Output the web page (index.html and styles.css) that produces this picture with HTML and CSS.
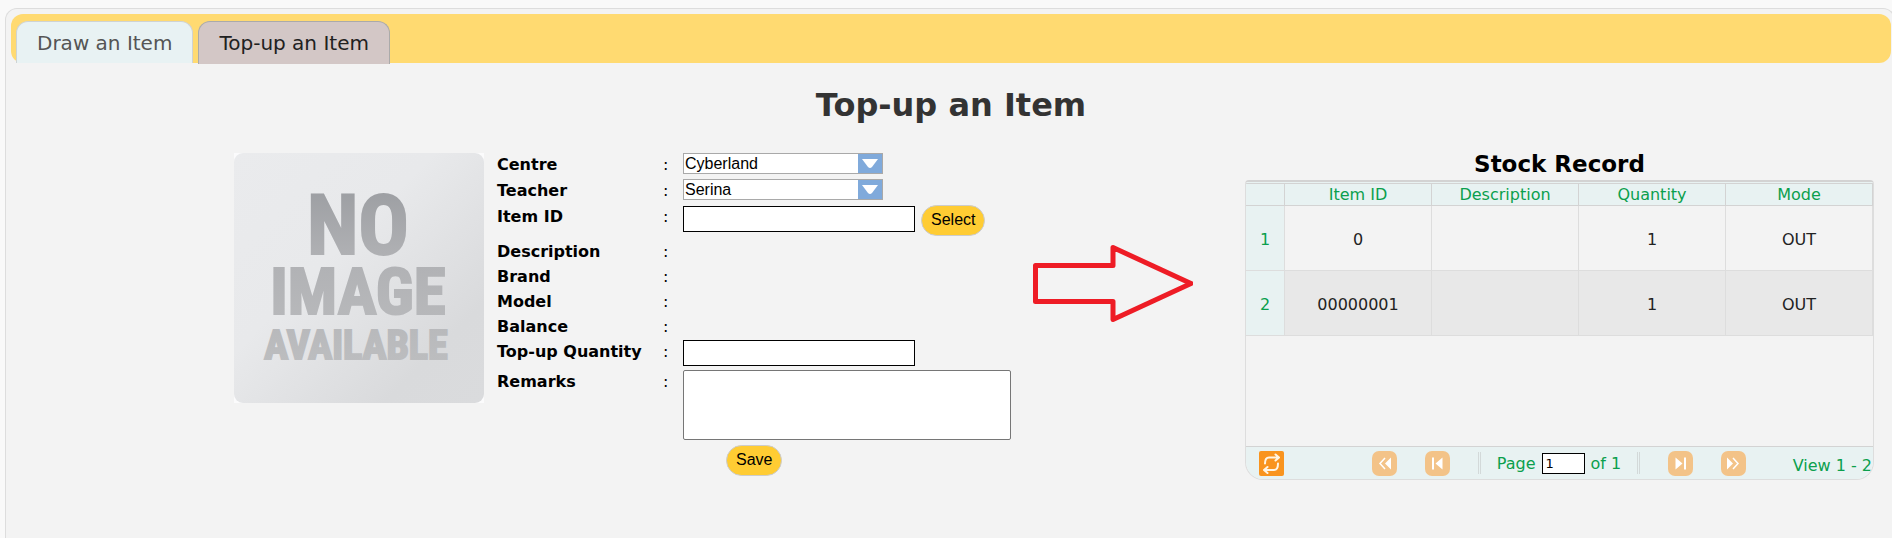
FILE: index.html
```html
<!DOCTYPE html>
<html lang="en">
<head>
<meta charset="utf-8">
<title>Top-up an Item</title>
<link rel="stylesheet" href="styles.css">
</head>
<body>
<main class="panel">
  <nav class="tabs">
    <a class="tab" href="#draw">Draw an Item</a>
    <a class="tab tab-active" href="#topup" aria-current="page">Top-up an Item</a>
  </nav>
  <h1 class="title">Top-up an Item</h1>
  <div class="content">
    <div class="photo">
      <svg class="photo-art" viewBox="0 0 250 250" role="img" aria-label="No image available">
        <defs>
          <linearGradient id="card" x1="0" y1="0" x2="1" y2="1">
            <stop offset="0" stop-color="#eaebed"/>
            <stop offset="0.4" stop-color="#e8e9eb"/>
            <stop offset="0.8" stop-color="#d9dadc"/>
            <stop offset="1" stop-color="#dadbdd"/>
          </linearGradient>
          <linearGradient id="ink" gradientUnits="userSpaceOnUse" x1="0" y1="34" x2="0" y2="208">
            <stop offset="0" stop-color="#9c9ea2"/>
            <stop offset="0.4" stop-color="#b0b1b4"/>
            <stop offset="1" stop-color="#bcbdbf"/>
          </linearGradient>
        </defs>
        <rect width="250" height="250" fill="#fbfbfc"/>
        <rect width="250" height="250" rx="9" fill="url(#card)"/>
        <g class="photo-text" fill="url(#ink)" stroke="url(#ink)" text-anchor="middle">
          <text class="word-no" x="124" y="101">NO</text>
          <text class="word-image" x="124" y="161">IMAGE</text>
          <text class="word-available" x="122" y="206">AVAILABLE</text>
        </g>
      </svg>
    </div>
    <form class="form">
      <div class="row">
        <label class="label" for="centre">Centre</label><span>:</span>
        <div class="field"><span class="select"><select id="centre"><option>Cyberland</option></select><svg class="arrow-down" viewBox="0 0 24 19"><rect width="24" height="19" fill="#80aadb"/><path d="M4 5h16l-6 8q-2 2-4 0z" fill="#fff"/></svg></span></div>
      </div>
      <div class="row">
        <label class="label" for="teacher">Teacher</label><span>:</span>
        <div class="field"><span class="select"><select id="teacher"><option>Serina</option></select><svg class="arrow-down" viewBox="0 0 24 19"><rect width="24" height="19" fill="#80aadb"/><path d="M4 5h16l-6 8q-2 2-4 0z" fill="#fff"/></svg></span></div>
      </div>
      <div class="row row-item">
        <label class="label" for="item">Item ID</label><span>:</span>
        <div class="field"><input class="text" id="item" type="text"><button class="button" type="button">Select</button></div>
      </div>
      <div class="row row-info"><span class="label">Description</span><span>:</span></div>
      <div class="row row-info"><span class="label">Brand</span><span>:</span></div>
      <div class="row row-info"><span class="label">Model</span><span>:</span></div>
      <div class="row row-info"><span class="label">Balance</span><span>:</span></div>
      <div class="row row-quantity">
        <label class="label" for="quantity">Top-up Quantity</label><span>:</span>
        <div class="field"><input class="text" id="quantity" type="text"></div>
      </div>
      <div class="row row-remarks">
        <label class="label" for="remarks">Remarks</label><span>:</span>
        <div class="field"><textarea class="remarks" id="remarks"></textarea></div>
      </div>
      <div class="actions"><button class="button" type="button">Save</button></div>
    </form>
    <svg class="pointer" viewBox="0 0 160 78" aria-hidden="true">
      <path d="M2.500 20.500H80V2.500L158 38.500L80 74.500V56.500H2.500Z" fill="none" stroke="#ee1c25" stroke-width="5" stroke-linejoin="round"/>
    </svg>
    <section class="stock">
      <h2 class="stock-title">Stock Record</h2>
      <div class="grid">
        <div class="grid-body">
          <table class="records">
            <colgroup><col class="col-number"><col><col><col><col></colgroup>
            <thead><tr><th></th><th>Item ID</th><th>Description</th><th>Quantity</th><th>Mode</th></tr></thead>
            <tbody>
              <tr><th>1</th><td>0</td><td></td><td>1</td><td>OUT</td></tr>
              <tr><th>2</th><td>00000001</td><td></td><td>1</td><td>OUT</td></tr>
            </tbody>
          </table>
        </div>
        <div class="pager">
          <button class="icon-button refresh" type="button" aria-label="Refresh"><svg viewBox="0 0 25 25"><rect width="25" height="25" rx="2" fill="#f9941e"/><g fill="none" stroke="#fff5e4" stroke-width="2" stroke-linecap="round" stroke-linejoin="round"><path d="M6 12.500C6 8.500 7 6.500 10 6.500H19.500M16.500 3.500l3.500 3l-3.500 3"/><path d="M19 12.500C19 17 18 19 15 19H5.500M8.500 16l-3.500 3l3.500 3"/></g></svg></button>
          <div class="pages">
            <button class="icon-button" type="button" aria-label="First page" disabled><svg viewBox="0 0 25 25"><rect width="25" height="25" rx="7" fill="#f3c388"/><path d="M13 7l-5 5.500l5 5.500" fill="none" stroke="#fff" stroke-width="1.500"/><path d="M19 6.500v12l-6-6z" fill="#fff"/></svg></button>
            <button class="icon-button" type="button" aria-label="Previous page" disabled><svg viewBox="0 0 25 25"><rect width="25" height="25" rx="7" fill="#f3c388"/><path d="M7 6.500h2v12h-2zM17.500 6.500v12l-7-6z" fill="#fff"/></svg></button>
            <span class="separator"></span>
            <label class="page-label">Page <input class="page-input" type="text" value="1"> of 1</label>
            <span class="separator"></span>
            <button class="icon-button" type="button" aria-label="Next page" disabled><svg viewBox="0 0 25 25"><rect width="25" height="25" rx="7" fill="#f3c388"/><path d="M16 6.500h2v12h-2zM7.500 6.500v12l7-6z" fill="#fff"/></svg></button>
            <button class="icon-button" type="button" aria-label="Last page" disabled><svg viewBox="0 0 25 25"><rect width="25" height="25" rx="7" fill="#f3c388"/><path d="M12 7l5 5.500l-5 5.500" fill="none" stroke="#fff" stroke-width="1.500"/><path d="M6 6.500v12l6-6z" fill="#fff"/></svg></button>
          </div>
          <span class="summary">View 1 - 2</span>
        </div>
      </div>
    </section>
  </div>
</main>
</body>
</html>
```
FILE: styles.css
```css
* { box-sizing: border-box; }

body {
  margin: 0;
  padding-top: 8px;
  min-height: 100vh;
  display: flex;
  overflow: hidden;
  background: #f9f9f9;
  color: #000;
  font: 16px Verdana, "DejaVu Sans", sans-serif;
}

.panel {
  flex: 1;
  min-width: 0;
  margin: 0 -3px 0 5px;
  padding: 5px 3px 5px 5px;
  border: 1px solid #ddd;
  border-bottom: 0;
  border-radius: 12px 12px 0 0;
  background: #f3f3f3;
}

.tabs {
  display: flex;
  align-items: flex-start;
  gap: 5px;
  height: 49px;
  padding: 7px 5px 0;
  border-radius: 12px;
  background: #ffda71;
}

.tab {
  height: 42px;
  padding: 0 20px;
  border: 1px solid #cfd3d3;
  border-bottom: 0;
  border-radius: 12px 12px 0 0;
  background: #e8f2f3;
  color: #555;
  font-size: 20px;
  line-height: 42px;
  text-decoration: none;
  white-space: nowrap;
}

.tab-active {
  height: 43px;
  border-color: #aaa;
  background: #d3c7c6;
  color: #212121;
}

.title {
  margin: 23px 0 29px;
  color: #333;
  font-size: 32px;
  line-height: 38px;
  text-align: center;
}

.content {
  display: grid;
  grid-template-columns: 250px 549px 1fr 629px;
  align-items: start;
  padding: 0 17px 0 223px;
}

.photo-art { display: block; width: 100%; }
.photo-text { font-family: "Liberation Sans Narrow", "Roboto Condensed", "Open Sans Condensed", "DejaVu Sans Condensed", sans-serif; font-weight: 700; stroke-width: 2px; }
.word-no { font-size: 84px; }
.word-image { font-size: 65px; }
.word-available { font-size: 40px; }

.form { padding-left: 13px; }

.row {
  display: grid;
  grid-template-columns: 166px 20px 1fr;
  align-items: start;
  min-height: 26px;
  line-height: 23px;
}

.row-item { min-height: 35px; }
.row-info { min-height: 25px; }
.row-quantity { min-height: 30px; }
.row-remarks { min-height: 75px; }
.row-item .text { margin-top: 1px; }

.label { font-weight: 700; white-space: nowrap; }
.field { display: flex; gap: 6px; }

.select {
  display: grid;
  width: 200px;
  height: 21px;
  border: 1px solid #a9a9a9;
  background: #fff;
}

.select select {
  grid-area: 1 / 1;
  appearance: none;
  min-width: 0;
  margin: 0;
  padding: 0 24px 0 1px;
  border: 0;
  border-radius: 0;
  background: none;
  color: #000;
  font: 16px "Liberation Sans", Arial, sans-serif;
}

.arrow-down {
  grid-area: 1 / 1;
  justify-self: end;
  width: 24px;
  height: 19px;
  pointer-events: none;
}

.text {
  width: 232px;
  height: 26px;
  border: 1px solid #000;
  background: #fff;
  font: 16px "Liberation Sans", Arial, sans-serif;
}

.button {
  height: 31px;
  padding: 0 9px 2px;
  border: 1px solid #ccc;
  border-radius: 16px;
  background: #fc3;
  color: #000;
  font: 16px "Liberation Sans", Arial, sans-serif;
}

.remarks {
  width: 328px;
  height: 70px;
  border: 1px solid #767676;
  border-radius: 2px;
  background: #fff;
  resize: none;
}

.actions { padding-left: 229px; }

.pointer {
  width: 160px;
  height: 78px;
  margin-top: 92px;
}

.stock-title {
  margin: -3px 0 2px;
  font-size: 23px;
  line-height: 28px;
  text-align: center;
}

.grid {
  overflow: hidden;
  border: 1px solid #ddd;
  border-top: 2px solid #d3d3d3;
  border-radius: 4px 4px 18px 18px;
}

.grid-body { min-height: 264px; background: #f3f3f3; }

.records {
  width: 100%;
  table-layout: fixed;
  border-collapse: separate;
  border-spacing: 0;
  border-top: 1px solid #e8f2f2;
}

.col-number { width: 39px; }

.records th,
.records td {
  height: 65px;
  padding: 3px 0 0;
  border-right: 1px solid #ddd;
  border-bottom: 1px solid #ddd;
  color: #222;
  font-weight: 400;
  text-align: center;
}

.records th { background: #e8f2f2; color: #0b9f4d; }

.records thead th {
  height: 23px;
  padding: 0;
  border-top: 1px solid #d3d3d3;
  border-color: #d3d3d3;
  line-height: 21px;
}

.records tbody tr:nth-child(even) td { background: #e8e8e8; }

.pager {
  display: grid;
  grid-template-columns: 1fr auto 1fr;
  align-items: center;
  height: 33px;
  padding-right: 1px;
  border-top: 1px solid #d3d3d3;
  background: #e8f2f2;
  color: #0b9f4d;
}

.icon-button {
  width: 25px;
  height: 25px;
  padding: 0;
  border: 0;
  background: none;
}

.icon-button svg { display: block; }
.refresh { margin-left: 13px; }

.pages { display: flex; align-items: center; gap: 28px; }

.separator {
  width: 3px;
  height: 22px;
  border: solid #d3d9d9;
  border-width: 0 1px;
}

.page-label {
  display: flex;
  align-items: center;
  gap: 6px;
  margin: 0 -12px;
  white-space: nowrap;
}

.page-input {
  width: 43px;
  height: 21px;
  padding: 1px 3px;
  border: 1px solid #000;
  font: 13px Verdana, "DejaVu Sans", sans-serif;
}

.summary { padding-top: 4px; text-align: right; white-space: nowrap; }
```
